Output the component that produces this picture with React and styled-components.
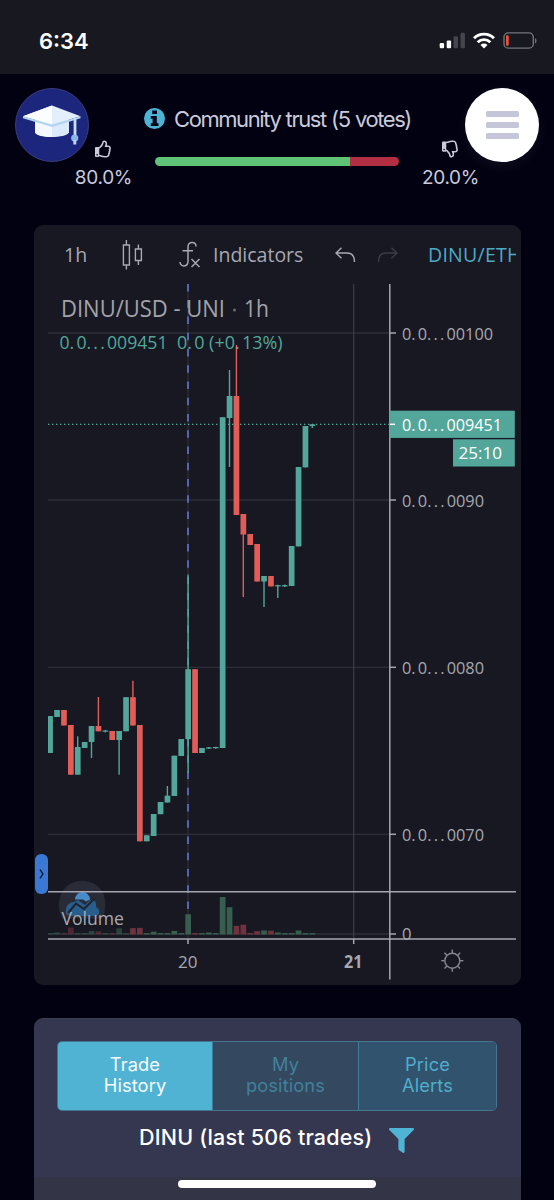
import styled, { createGlobalStyle } from "styled-components"
import { FaFilter, FaRegThumbsDown, FaRegThumbsUp } from "react-icons/fa"

const GREEN = "#53a79a"
const RED = "#e25d57"

// [open/close top, open/close bottom, high, low, color]
const candles = [
    [716, 753, 716, 753, GREEN],
    [710, 717, 710, 717, GREEN],
    [710, 725.5, 710, 725.5, RED],
    [725, 774.7, 725, 774.7, RED],
    [747, 774.7, 736.3, 774.7, GREEN],
    [742, 748, 742, 748, GREEN],
    [726, 742, 726, 758, GREEN],
    [726, 731.3, 697, 731.3, RED],
    [730.5, 731.7, 730, 732.4, GREEN],
    [731, 740, 731, 740, RED],
    [731, 740, 731, 774.7, GREEN],
    [697.2, 731.3, 697.2, 731.3, GREEN],
    [697.2, 725.5, 680.7, 725.5, RED],
    [725, 841.3, 725, 841.3, RED],
    [835.3, 841.3, 835.3, 841.3, GREEN],
    [814, 836, 814, 836, GREEN],
    [802, 814.2, 802, 814.2, GREEN],
    [795.7, 802.5, 786, 802.5, GREEN],
    [755.7, 796, 755.7, 796, GREEN],
    [739, 756, 739, 756, GREEN],
    [669.2, 739.2, 574.5, 773, GREEN],
    [669.2, 753, 669.2, 753, RED],
    [748, 753, 748, 753, GREEN],
    [747.4, 748.6, 747, 749, GREEN],
    [747, 748.2, 746.8, 748.8, GREEN],
    [417.2, 748, 417.2, 748, GREEN],
    [396, 418, 370, 467, GREEN],
    [396, 515, 345, 515, RED],
    [514, 534.5, 514, 597, RED],
    [534, 545, 534, 545, RED],
    [544, 581.5, 544, 581.5, RED],
    [576, 581.5, 576, 607, GREEN],
    [576, 586.4, 576, 586.4, RED],
    [585.2, 586.4, 584.8, 598, GREEN],
    [585.2, 586.4, 584.5, 587, GREEN],
    [546, 586, 546, 586, GREEN],
    [467, 546.4, 467, 546.4, GREEN],
    [426, 467.4, 426, 467.4, GREEN],
    [424.3, 426, 424.3, 428, GREEN],
]

const volumes = [
    1.4, 2, 1.4, 7, 1.4, 1.4, 3.6, 3.2, 1.4, 1.4, 6.2, 1.4, 6.4, 6.6, 1.4, 2.8, 1.4, 1.4, 3.6, 1.4,
    20.3, 1.4, 1.4, 2, 1.4, 37.5, 27.3, 8.6, 9.8, 1.4, 3.3, 4, 3.8, 2, 1.4, 1.4, 4, 1.4, 1.4,
]

const prices = [
    { y: 333, label: "0.0...00100", width: 91 },
    { y: 500, label: "0.0...0090", width: 82 },
    { y: 667.3, label: "0.0...0080", width: 82 },
    { y: 834.3, label: "0.0...0070", width: 82 },
]

const candleX = (index) => 50.1 + index * 6.9

export default function App() {
    return (
        <Page>
            <GlobalStyle />
            <StatusBar>
                <Clock>6:34</Clock>
                <StatusIcons />
            </StatusBar>
            <Header />
            <ChartCard>
                <Toolbar />
                <PriceChart />
                <Handle>
                    <svg width="5" height="10" viewBox="0 0 5 10"><path d="M1 .7 4 5 1 9.3" fill="none" stroke="#101b35" strokeWidth="1.4" /></svg>
                </Handle>
            </ChartCard>
            <TradesPanel>
                <Tabs>
                    <Tab $active $width={154}>Trade<br />History</Tab>
                    <Tab $muted $width={146}>My<br />positions</Tab>
                    <Tab $width={138}>Price<br />Alerts</Tab>
                </Tabs>
                <TradesTitle>
                    <span>DINU (last 506 trades)</span>
                    <FaFilter />
                </TradesTitle>
                <SafeArea><HomeBar /></SafeArea>
            </TradesPanel>
        </Page>
    )
}

function StatusIcons() {
    return (
        <svg width="100" height="20" viewBox="438 31 100 20">
            <rect x="439.7" y="43" width="4.4" height="5.2" rx="1.2" fill="#fff" />
            <rect x="446.7" y="40.4" width="4.4" height="7.8" rx="1.2" fill="#fff" />
            <rect x="453.6" y="36.3" width="4.4" height="11.9" rx="1.2" fill="#45464d" />
            <rect x="460.5" y="32.8" width="4.4" height="15.4" rx="1.2" fill="#45464d" />
            <g fill="none" stroke="#fff" strokeWidth="2.9">
                <path d="M474 38.2a14.4 14.4 0 0 1 20 0" />
                <path d="M477.7 42.2a9 9 0 0 1 12.6 0" />
            </g>
            <path d="M480.5 45a5 5 0 0 1 7 0L484 48.5z" fill="#fff" />
            <rect x="504" y="32.9" width="29.3" height="15.2" rx="4.2" fill="none" stroke="#73747a" strokeWidth="1.4" />
            <path d="M535 38.2c2 .8 2 4.4 0 5.2z" fill="#73747a" />
            <rect x="506" y="35.3" width="2.7" height="10.4" rx="1" fill="#f0513c" />
        </svg>
    )
}

function Header() {
    return (
        <TopBar>
            <Logo>
                <svg width="58" height="40" viewBox="23 108 58 40">
                    <path d="M35 122v13.5c3 6 31 6 34 0V122z" fill="#dcebfb" />
                    <path d="M35 122v13.5c1.5 3 9 4.5 17 4.5v-16z" fill="#f4f9ff" />
                    <path d="M52 108.5 23 119.2 52 127.5 80.5 119.2z" fill="#e3effc" />
                    <path d="M52 108.5 23 119.2 52 127.5z" fill="#fbfdff" />
                    <path d="M23 119.2 52 127.5 80.5 119.2v2L52 130 23 121.2z" fill="#b4d5f2" />
                    <path d="M75 121.5V138" stroke="#c5dff7" strokeWidth="2.8" />
                    <circle cx="74.7" cy="141" r="3.6" fill="#8bb8ec" />
                    <path d="M73.3 143h3v4.5h-3z" fill="#b8d7f5" />
                </svg>
            </Logo>
            <TrustTitle>
                <svg viewBox="0 0 21 21">
                    <circle cx="10.5" cy="10.5" r="10.5" fill="#4fb3d4" />
                    <path d="M8.2 2.6h4.8v3.3H8.2zM6.8 8h6v7.300h1.700v2.600H6.800v-2.600h1.800v-4.600H6.800z" fill="#05061a" />
                </svg>
                <span>Community trust (5 votes)</span>
            </TrustTitle>
            <TrustRow>
                <Vote>
                    <FaRegThumbsUp />
                    <span>80.0%</span>
                </Vote>
                <TrustBar />
                <Vote>
                    <FaRegThumbsDown />
                    <span>20.0%</span>
                </Vote>
            </TrustRow>
            <MenuButton>
                <i />
                <i />
                <i />
            </MenuButton>
        </TopBar>
    )
}

function Toolbar() {
    return (
        <Tools>
            <Tool $width={57}>1h</Tool>
            <Tool $width={57}>
                <svg width="22" height="30" viewBox="0 0 22 30" fill="none" stroke="currentColor" strokeWidth="1.4">
                    <path d="M1.4 5h6v20h-6zM4.4 0v5M4.4 25v4.5M13.4 9h6v11.5h-6zM16.4 4.5V9M16.4 20.5V25" />
                </svg>
            </Tool>
            <Tool $width={35}>
                <svg width="22" height="28" viewBox="0 0 22 28" fill="none" stroke="currentColor" strokeWidth="1.5">
                    <path d="M17 5.5C17 .3 9.5 0 9 5.5V20c0 6.500-7.800 6.300-8 1M3.500 9.800H14M12.500 18l8 8M20.500 18l-8 8" />
                </svg>
            </Tool>
            <Tool $width={121}>Indicators</Tool>
            <Tool $width={42}><ArrowIcon /></Tool>
            <Tool $width={52} $disabled $flip><ArrowIcon /></Tool>
            <Pair>DINU/ETH</Pair>
        </Tools>
    )
}

function ArrowIcon() {
    return (
        <svg width="21" height="16" viewBox="0 0 21 16" fill="none" stroke="currentColor" strokeWidth="1.4">
            <path d="M6.5.7 1 6l5.5 5.300M1.200 6H12c5 0 7.500 3.500 7.500 9" />
        </svg>
    )
}

// prices are set with loosely tracked dots
function Price({ x, y, width, children }) {
    return (
        <text x={x} y={y} textLength={width} lengthAdjust="spacingAndGlyphs">
            {children.split(/(\.+)/).map((part, index) => (
                <tspan key={index} letterSpacing={part[0] === "." ? 2.3 : 0}>{part}</tspan>
            ))}
        </text>
    )
}

function PriceChart() {
    return (
        <Chart viewBox="48 284 473 700">
            {/* grid */}
            <g stroke="#2d2e38" strokeWidth="1.3">
                {prices.map((price) => <path key={price.y} d={`M48 ${price.y}H390`} />)}
                <path d="M48 934H390M188 284V939" />
                <path d="M353.7 284V939" stroke="#3a3b46" />
            </g>
            <path d="M188 284V934" stroke="#6070c6" strokeWidth="1.7" strokeDasharray="7.5 8.75" />
            <path d="M48 424.4H390" stroke={GREEN} strokeWidth="1.3" strokeDasharray="1.4 2.6" />

            {/* watermark */}
            <path d="M62.3 891.5a24 24 0 0 1 40 0c4 7 4 18 0 27h-40c-5-9-4-20 0-27z" fill="#292b36" />
            <path d="M75 899.5a7.500 7.500 0 0 1 15 0l-4 2-3-2z" fill="#478bc9" />
            <path d="M66 910c0-5 4-8 8-8l4-2 7 5 5-5c4-1 7 2 6 7 4 1 5 8 0 9H71c-5 0-6-4-5-6z" fill="#285d8c" />
            <path d="M68 913 76 903.500 84 909 94.500 898.500" fill="none" stroke="#20232e" strokeWidth="2" />

            {/* volume */}
            {volumes.map((height, index) => (
                <rect
                    key={index}
                    x={Math.max(48, candleX(index) - 2.8)}
                    y={934.5 - height}
                    width="5.7"
                    height={height}
                    fill={candles[index][4] === GREEN ? "#385e50" : "#70323e"}
                    opacity={index < 12 ? 0.6 : 1}
                />
            ))}

            {/* candles */}
            {candles.map(([top, bottom, high, low, color], index) => (
                <g key={index} fill={color}>
                    <rect x={candleX(index) - 0.7} y={high} width="1.4" height={low - high} />
                    <rect x={Math.max(48, candleX(index) - 2.8)} y={top} width={index ? 5.7 : 4.9} height={bottom - top} />
                </g>
            ))}

            {/* axes */}
            <g stroke="#a5a5b0" strokeWidth="1.5">
                <path d="M48 891.7H516M48 939H516M389.8 284V979.5" />
                <path d="M353.7 939v5M188 939v5M390 934h6" />
                {prices.map((price) => <path key={price.y} d={`M390 ${price.y}h6`} />)}
            </g>
            <g fill="#a8a8b0" fontSize="17">
                {prices.map((price) => (
                    <Price key={price.y} x="402" y={price.y + 6.5} width={price.width}>{price.label}</Price>
                ))}
                <text x="402" y="940" textLength="9.5" lengthAdjust="spacingAndGlyphs">0</text>
                <text x="178" y="968" textLength="19.5" lengthAdjust="spacingAndGlyphs">20</text>
                <text x="344" y="968" textLength="18.5" lengthAdjust="spacingAndGlyphs" fontWeight="700">21</text>
                <text x="61.5" y="924.5" fontSize="18.5" textLength="62.5" lengthAdjust="spacingAndGlyphs">Volume</text>
            </g>
            <rect x="389.5" y="410.7" width="125.3" height="27.2" fill={GREEN} />
            <rect x="453" y="439.3" width="61.8" height="27.2" fill={GREEN} />
            <path d="M390 424.3h5" stroke="#fff" strokeWidth="1.4" />
            <g fill="#fff" fontSize="17">
                <Price x="402" y="430.5" width={100}>0.0...009451</Price>
                <text x="458.5" y="459" textLength="43.5" lengthAdjust="spacingAndGlyphs">25:10</text>
            </g>

            {/* legend */}
            <text x="61" y="317" fontSize="23" fill="#a2a3ab" textLength="164" lengthAdjust="spacingAndGlyphs">DINU/USD - UNI</text>
            <circle cx="234.5" cy="310" r="1.5" fill="#696a73" />
            <text x="244" y="317" fontSize="23" fill="#a2a3ab" textLength="25" lengthAdjust="spacingAndGlyphs">1h</text>
            <g fontSize="18.5" fill={GREEN}>
                <Price x="59.5" y="348.8" width={108}>0.0...009451</Price>
                <Price x="177" y="348.8" width={105.5}>0.0 (+0.13%)</Price>
            </g>

            {/* settings */}
            <g fill="none" stroke="#85868e" strokeWidth="1.4">
                <circle cx="452.3" cy="960.7" r="7.5" />
                {[0, 45, 90, 135, 180, 225, 270, 315].map((angle) => (
                    <path key={angle} d="M452.3 953.2v-3.6" transform={`rotate(${angle} 452.3 960.7)`} />
                ))}
            </g>
        </Chart>
    )
}

const GlobalStyle = createGlobalStyle`
    body {
        margin: 0;
        background: #010112;
        overflow: hidden;
    }

    * {
        box-sizing: border-box;
    }
`
const Page = styled.div`
    width: 554px;
    height: 1200px;
    overflow: hidden;
    background: #010112;
    font-family: Inter, sans-serif;
`
const StatusBar = styled.div`
    height: 74px;
    padding: 0 16px 0 39px;
    background: #171820;
    display: flex;
    justify-content: space-between;

    svg {
        margin-top: 31px;
    }
`
const Clock = styled.div`
    padding-top: 28px;
    color: #fff;
    font-size: 22px;
    font-weight: 600;
    line-height: 26px;
`
const TopBar = styled.header`
    position: relative;
    height: 151px;
    padding: 32px 75px 0;
`
const Logo = styled.div`
    position: absolute;
    left: 15px;
    top: 14px;
    width: 74px;
    height: 74px;
    border-radius: 50%;
    border: 1.5px solid #393c7c;
    background: #1d267d;
    display: flex;
    align-items: center;
    justify-content: center;
`
const MenuButton = styled.button`
    position: absolute;
    left: 465px;
    top: 14px;
    width: 74px;
    height: 74px;
    padding: 0;
    border: 0;
    border-radius: 50%;
    background: #fff;
    box-shadow: 0 4px 14px rgba(255, 255, 255, 0.06);
    display: flex;
    flex-direction: column;
    align-items: center;
    justify-content: center;
    gap: 5px;

    i {
        width: 33px;
        height: 6px;
        border-radius: 1.5px;
        background: #c5c6d9;
    }
`
const TrustTitle = styled.div`
    height: 26px;
    padding-left: 69px;
    display: flex;
    align-items: center;
    gap: 9px;
    color: #c9cadb;
    font-size: 22px;
    letter-spacing: -1.42px;
    word-spacing: 0.5px;
    white-space: nowrap;

    svg {
        width: 21px;
        height: 21px;
        margin-top: -2px;
        flex: none;
    }
`
const TrustRow = styled.div`
    display: flex;
    justify-content: space-between;
    margin-top: 8px;
`
const Vote = styled.div`
    width: 57px;
    display: flex;
    flex-direction: column;
    align-items: center;
    gap: 8px;
    color: #c9cadb;
    font-size: 19px;
    letter-spacing: -0.3px;
    line-height: 24px;

    svg {
        width: 17px;
        height: 18px;
    }
`
const TrustBar = styled.div`
    width: 244px;
    height: 9px;
    margin-top: 17px;
    border-radius: 5px;
    background: linear-gradient(to right, #5fc377 80%, #b22f43 80%);
`
const ChartCard = styled.section`
    position: relative;
    width: 487px;
    height: 760px;
    margin-left: 34px;
    border-radius: 9px;
    background: #171822;
    font-family: "Open Sans", "Noto Sans", sans-serif;
    overflow: hidden;
`
const Tools = styled.div`
    height: 59px;
    padding: 0 5px 0 30px;
    display: flex;
    align-items: center;
    color: #a8a9b2;
    font-size: 19.5px;
    overflow: hidden;
`
const Tool = styled.div`
    flex: none;
    width: ${(props) => props.$width}px;
    display: flex;
    align-items: center;
    color: ${(props) => (props.$disabled ? "#3b3c45" : "inherit")};

    svg {
        margin-left: 1px;
        transform: ${(props) => (props.$flip ? "scaleX(-1)" : "none")};
    }
`
const Pair = styled.div`
    flex: 1;
    overflow: hidden;
    color: #4fa9c7;
    letter-spacing: 0.25px;
    white-space: nowrap;
`
const Chart = styled.svg`
    display: block;
    width: 473px;
    height: 700px;
    margin-left: 14px;
`
const Handle = styled.div`
    position: absolute;
    left: 1px;
    top: 629px;
    width: 13px;
    height: 40px;
    border-radius: 6px;
    background: #3b78d4;
    display: flex;
    align-items: center;
    justify-content: center;
`
const TradesPanel = styled.section`
    width: 487px;
    height: 190px;
    margin: 33px 0 0 34px;
    padding-top: 22px;
    border-radius: 9px 9px 0 0;
    border-top: 1px solid #3d4054;
    background: #34374f;
    overflow: hidden;
`
const Tabs = styled.div`
    width: 440px;
    height: 70px;
    margin-left: 23px;
    display: flex;
    border-radius: 5px;
    border: 1px solid #46768f;
    overflow: hidden;
`
const Tab = styled.div`
    width: ${(props) => props.$width}px;
    padding-top: 12px;
    background: ${(props) => (props.$active ? "#50b3d4" : props.$muted ? "#344960" : "#31536d")};
    color: ${(props) => (props.$active ? "#f5fbfd" : props.$muted ? "#40819b" : "#50adcb")};
    border-left: ${(props) => (props.$active ? "0" : "1px solid #437c97")};
    font-size: 18.3px;
    line-height: 20.5px;
    letter-spacing: 0.1px;
    text-align: center;
`
const TradesTitle = styled.div`
    height: 66px;
    padding: 13px 0 0 105px;
    display: flex;
    align-items: flex-start;
    gap: 17px;
    color: #fff;
    font-size: 21.5px;
    font-weight: 500;
    line-height: 27px;
    letter-spacing: 0.19px;
    white-space: nowrap;

    svg {
        width: 25px;
        height: 25px;
        margin-top: 4px;
        color: #4fb3d4;
    }
`
const SafeArea = styled.div`
    height: 31px;
    padding-top: 3px;
    background: #333445;
`
const HomeBar = styled.div`
    width: 198px;
    height: 8px;
    margin-left: 144px;
    border-radius: 4px;
    background: #fff;
`
